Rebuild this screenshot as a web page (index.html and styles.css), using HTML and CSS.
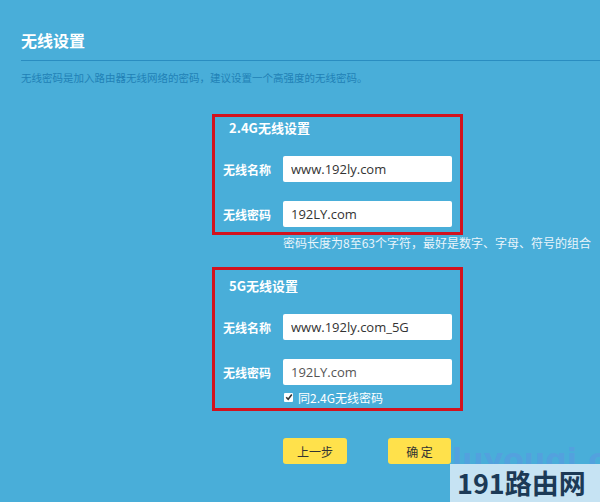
FILE: index.html
```html
<!DOCTYPE html>
<html lang="zh-CN">
<head>
<meta charset="utf-8">
<title>无线设置</title>
<link rel="stylesheet" href="styles.css">
</head>
<body>
<div class="page">
  <div class="title">无线设置</div>
  <div class="desc">无线密码是加入路由器无线网络的密码，建议设置一个高强度的无线密码。</div>
  <div class="form">
    <div class="box box1">
      <div class="heading">2.4G无线设置</div>
      <div class="row">
        <span class="label">无线名称</span>
        <input class="field" type="text" value="www.192ly.com">
      </div>
      <div class="row row2">
        <span class="label">无线密码</span>
        <input class="field" type="text" value="192LY.com">
      </div>
    </div>
    <div class="hint">密码长度为8至63个字符，最好是数字、字母、符号的组合</div>
    <div class="box box2">
      <div class="heading">5G无线设置</div>
      <div class="row">
        <span class="label">无线名称</span>
        <input class="field" type="text" value="www.192ly.com_5G">
      </div>
      <div class="row row2">
        <span class="label">无线密码</span>
        <input class="field dim" type="text" value="192LY.com">
      </div>
      <div class="check">
        <span class="cb"><svg width="8" height="8" viewBox="0 0 8 8"><path d="M1.2 4.2 L3.2 6.2 L6.8 1.6" fill="none" stroke="#333" stroke-width="1.6"/></svg></span>
        <span>同2.4G无线密码</span>
      </div>
    </div>
    <div class="buttons">
      <button class="btn btn-prev">上一步</button>
      <button class="btn btn-ok">确 定</button>
    </div>
  </div>
</div>
<div class="mark-faint"><span>luyouqi.com</span></div>
<div class="mark">191路由网</div>
</body>
</html>
```
FILE: styles.css
```css
html, body {
  margin: 0;
  padding: 0;
}
body {
  width: 600px;
  height: 502px;
  overflow: hidden;
  background: #49aed9;
  font-family: "Noto Sans CJK SC", "Noto Sans", sans-serif;
  position: relative;
}
.page {
  padding-left: 21px;
}
.title {
  padding-top: 28px;
  font-size: 16px;
  line-height: 24px;
  font-weight: bold;
  color: #ffffff;
  padding-bottom: 8px;
  border-bottom: 1px solid #2a8dc1;
}
.desc {
  margin-top: 9px;
  font-size: 10.5px;
  line-height: 16px;
  color: #2181b6;
}
.form {
  margin-left: 191px;
  margin-top: 28px;
  width: 251px;
}
.box {
  border: 3px solid #d2121e;
  box-sizing: border-box;
  width: 251px;
}
.box1 {
  height: 121px;
  padding-top: 3px;
}
.box2 {
  height: 144px;
  margin-top: 16px;
  padding-top: 8px;
}
.heading {
  padding-left: 14px;
  font-size: 13px;
  line-height: 16px;
  font-weight: bold;
  color: #ffffff;
  margin-bottom: 20px;
}
.row {
  display: flex;
  align-items: center;
  padding-left: 8px;
  height: 26px;
}
.row2 {
  margin-top: 19px;
}
.label {
  width: 60px;
  font-size: 12px;
  font-weight: bold;
  color: #ffffff;
}
.field {
  width: 169px;
  height: 26px;
  box-sizing: border-box;
  border: none;
  border-radius: 2px;
  background: #ffffff;
  padding: 0 0 0 8px;
  margin: 0;
  font-family: "Open Sans", "Noto Sans CJK SC", sans-serif;
  font-size: 13px;
  color: #333333;
  outline: none;
}
.field.dim {
  color: #555555;
}
.hint {
  margin-left: 71px;
  font-size: 12px;
  line-height: 16px;
  color: #eaf5fb;
  white-space: nowrap;
}
.check {
  display: flex;
  align-items: center;
  margin-top: 5px;
  padding-left: 69px;
  height: 14px;
  font-size: 12px;
  color: #ffffff;
  gap: 5px;
}
.cb {
  width: 9px;
  height: 9px;
  background: #ffffff;
  border-radius: 1px;
  display: flex;
  align-items: center;
  justify-content: center;
}
.buttons {
  display: flex;
  gap: 41px;
  margin-top: 27px;
  padding-left: 71px;
}
.btn {
  height: 26px;
  border: none;
  border-radius: 3px;
  background: #ffe14b;
  font-family: "Noto Sans CJK SC", sans-serif;
  font-size: 12px;
  color: #333333;
  padding: 0;
  margin: 0;
}
.btn-prev {
  width: 64px;
}
.btn-ok {
  width: 63px;
}
.mark-faint {
  position: absolute;
  left: 452px;
  right: 0;
  top: 440px;
  height: 24px;
  overflow: hidden;
  font-family: "DejaVu Sans", sans-serif;
  font-size: 30px;
  font-weight: bold;
  line-height: 40px;
  color: rgba(110, 130, 235, 0.3);
  white-space: nowrap;
}
.mark {
  position: absolute;
  left: 450px;
  top: 464px;
  width: 150px;
  height: 38px;
  background: #c6e3f3;
  color: #1c3a56;
  font-family: "Noto Sans CJK SC", sans-serif;
  font-size: 27px;
  font-weight: bold;
  line-height: 38px;
  padding-left: 7px;
  box-sizing: border-box;
  white-space: nowrap;
  overflow: hidden;
}
```
